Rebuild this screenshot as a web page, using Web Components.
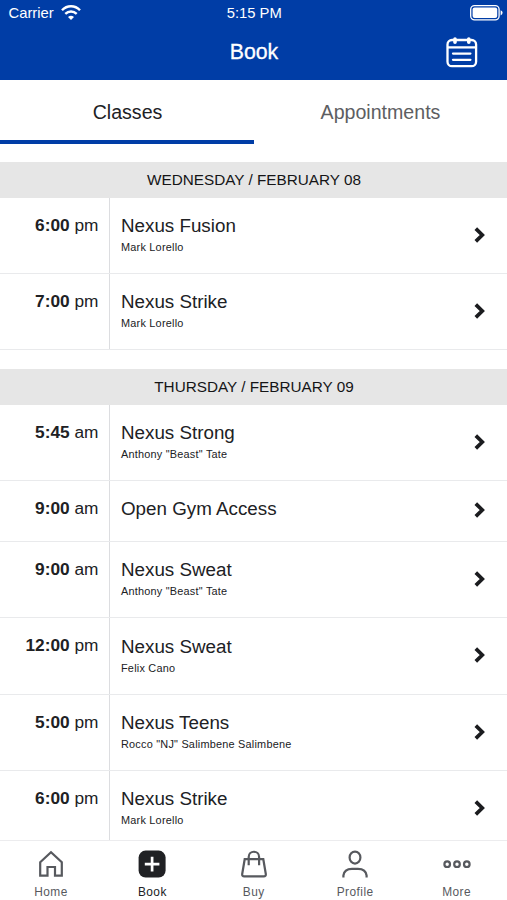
<!DOCTYPE html>
<html lang="en">
<head>
<meta charset="utf-8">
<title>Book</title>
<style>
  body {
    margin: 0;
    background: #fff;
    color: #202124;
    font-family: "Liberation Sans", Arial, sans-serif;
    overflow: hidden;
  }
</style>
</head>
<body>
<booking-app>
  <status-bar slot="top" carrier="Carrier" time="5:15 PM"></status-bar>
  <title-bar slot="top">Book</title-bar>
  <tab-strip slot="top">
    <tab-item active>Classes</tab-item>
    <tab-item>Appointments</tab-item>
  </tab-strip>

  <day-group day="WEDNESDAY / FEBRUARY 08">
    <class-row time="6:00" period="pm" coach="Mark Lorello">Nexus Fusion</class-row>
    <class-row time="7:00" period="pm" coach="Mark Lorello">Nexus Strike</class-row>
  </day-group>
  <day-group day="THURSDAY / FEBRUARY 09">
    <class-row time="5:45" period="am" coach='Anthony "Beast" Tate'>Nexus Strong</class-row>
    <class-row time="9:00" period="am">Open Gym Access</class-row>
    <class-row time="9:00" period="am" coach='Anthony "Beast" Tate'>Nexus Sweat</class-row>
    <class-row time="12:00" period="pm" coach="Felix Cano">Nexus Sweat</class-row>
    <class-row time="5:00" period="pm" coach='Rocco "NJ" Salimbene Salimbene'>Nexus Teens</class-row>
    <class-row time="6:00" period="pm" coach="Mark Lorello">Nexus Strike</class-row>
  </day-group>

  <nav-bar slot="bottom">
    <nav-item icon="home">Home</nav-item>
    <nav-item icon="book" active>Book</nav-item>
    <nav-item icon="buy">Buy</nav-item>
    <nav-item icon="profile">Profile</nav-item>
    <nav-item icon="more">More</nav-item>
  </nav-bar>
</booking-app>

<script>
class BookingApp extends HTMLElement {
  constructor() {
    super();
    this.attachShadow({ mode: "open" });
    this.shadowRoot.innerHTML = `
      <style>
        :host {
          display: flex;
          flex-direction: column;
          height: 900px;
        }
        main {
          flex: 1;
          min-height: 0;
          overflow: hidden;
          display: flex;
          flex-direction: column;
          gap: 18.7px;
          padding-top: 18px;
        }
      </style>
      <slot name="top"></slot>
      <main><slot></slot></main>
      <slot name="bottom"></slot>`;
  }
}

class StatusBar extends HTMLElement {
  constructor() {
    super();
    this.attachShadow({ mode: "open" });
  }

  connectedCallback() {
    this.shadowRoot.innerHTML = `
      <style>
        :host {
          display: grid;
          grid-template-columns: 1fr auto 1fr;
          align-items: center;
          flex: none;
          height: 25px;
          padding: 0 4px 0 8.5px;
          background: #003da6;
          color: #fff;
          font-size: 14.8px;
        }
        .left { display: flex; align-items: center; gap: 7px; }
        .time { padding-right: 3px; }
        .battery { justify-self: end; }
        svg { display: block; }
      </style>
      <div class="left">
        <span>${this.getAttribute("carrier")}</span>
        <svg width="20" height="15" viewBox="0 0 20 15" fill="none" stroke="#fff" stroke-width="2.4">
          <path d="M1 5.2C6-.1 14-.1 19 5.2M4.3 8.9C7.6 5.7 12.4 5.7 15.7 8.9"/>
          <path d="M10 14.9L7 11.9Q10 9.5 13 11.9Z" fill="#fff" stroke="none"/>
        </svg>
      </div>
      <span class="time">${this.getAttribute("time")}</span>
      <svg class="battery" width="33" height="16" viewBox="0 0 33 16">
        <rect x=".7" y=".7" width="28.4" height="14.2" rx="3.8" fill="none" stroke="#fff" stroke-width="1.3"/>
        <rect x="2.6" y="2.6" width="24.6" height="10.4" rx="2" fill="#fff"/>
        <path d="M30.6 5.2Q32.6 6 32.6 7.8T30.6 10.4Z" fill="#fff"/>
      </svg>`;
  }
}

class TitleBar extends HTMLElement {
  constructor() {
    super();
    this.attachShadow({ mode: "open" });
    this.shadowRoot.innerHTML = `
      <style>
        :host {
          display: grid;
          grid-template-columns: 1fr auto 1fr;
          align-items: center;
          flex: none;
          height: 55px;
          padding: 0 28px 1px 29px;
          box-sizing: border-box;
          background: #003da6;
          color: #fff;
          font-size: 21.3px;
          -webkit-text-stroke: .3px #fff;
        }
        .title { grid-column: 2; }
        svg { justify-self: end; display: block; }
      </style>
      <span class="title"><slot></slot></span>
      <svg width="34" height="34" viewBox="0 0 34 34" fill="none" stroke="#fff" stroke-width="2.3" stroke-linecap="round">
        <rect x="2.5" y="5" width="28.6" height="26.2" rx="4.5"/>
        <path d="M3 12.4H31" stroke-linecap="butt"/>
        <path d="M10 4V7.2M23.8 4V7.2" stroke-width="3.6"/>
        <path d="M8 18.6H25.4M8 24.8H25.4"/>
      </svg>`;
  }
}

class TabStrip extends HTMLElement {
  constructor() {
    super();
    this.attachShadow({ mode: "open" });
    this.shadowRoot.innerHTML = `
      <style>
        :host {
          display: flex;
          flex: none;
          height: 64px;
        }
      </style>
      <slot></slot>`;
  }
}

class TabItem extends HTMLElement {
  constructor() {
    super();
    this.attachShadow({ mode: "open" });
    this.shadowRoot.innerHTML = `
      <style>
        :host {
          display: flex;
          flex: 1;
          box-sizing: border-box;
          align-items: center;
          justify-content: center;
          border-bottom: 4px solid transparent;
          padding-top: 4px;
          color: #5d5e62;
          font-size: 19.6px;
        }
        :host([active]) {
          border-color: #003da6;
          padding-left: 1px;
          color: #202124;
        }
      </style>
      <slot></slot>`;
  }
}

class DayGroup extends HTMLElement {
  constructor() {
    super();
    this.attachShadow({ mode: "open" });
  }

  connectedCallback() {
    this.shadowRoot.innerHTML = `
      <style>
        :host { display: block; flex: none; }
        header {
          height: 35.8px;
          line-height: 36px;
          padding-left: 1px;
          background: #e6e6e6;
          text-align: center;
          font-size: 15.3px;
          color: #151517;
        }
      </style>
      <header>${this.getAttribute("day")}</header>
      <slot></slot>`;
  }
}

class ClassRow extends HTMLElement {
  constructor() {
    super();
    this.attachShadow({ mode: "open" });
  }

  connectedCallback() {
    const coach = this.getAttribute("coach");
    this.shadowRoot.innerHTML = `
      <style>
        :host {
          display: flex;
          box-sizing: border-box;
          height: ${coach ? 76.25 : 61.2}px;
          border-bottom: 1px solid #e9eaec;
        }
        .time {
          box-sizing: border-box;
          width: 110px;
          padding: 17px 10.5px 0 0;
          border-right: 1px solid #dcdde0;
          text-align: right;
          font-size: 17.3px;
          line-height: 20px;
        }
        .info { flex: 1; padding: 17.2px 0 0 11px; }
        .name { font-size: 18.8px; line-height: 22px; }
        .coach {
          margin-top: 4px;
          font-size: 10.9px;
          line-height: 13px;
          letter-spacing: .22px;
        }
        svg { align-self: center; margin: 0 20px 1.4px 0; }
      </style>
      <div class="time"><b>${this.getAttribute("time")}</b> ${this.getAttribute("period")}</div>
      <div class="info">
        <div class="name"><slot></slot></div>
        ${coach ? `<div class="coach">${coach}</div>` : ""}
      </div>
      <svg width="14" height="18" viewBox="0 0 14 18" fill="none" stroke="#1b1c1f" stroke-width="3.7">
        <path d="M2.8 2.6L9.3 9L2.8 15.4"/>
      </svg>`;
  }
}

class NavBar extends HTMLElement {
  constructor() {
    super();
    this.attachShadow({ mode: "open" });
    this.shadowRoot.innerHTML = `
      <style>
        :host {
          display: flex;
          flex: none;
          box-sizing: border-box;
          height: 60px;
          border-top: 1px solid #ececee;
          background: #fff;
        }
      </style>
      <slot></slot>`;
  }
}

const icons = {
  home: `<path d="M4.2 13.2L15 3.2L25.8 13.2V26.6H19V18H11.5V26.6H4.2Z"/>`,
  book: `<rect x="1.6" y="1.6" width="27" height="27" rx="7" fill="#202124" stroke="none"/>
    <path d="M15.1 7.8V22.4M7.8 15.1H22.4" stroke="#fff" stroke-width="2.7"/>`,
  buy: `<path d="M5.7 10.2H24.3L26.8 25Q27 27.4 24.8 27.4H5.2Q3 27.4 3.2 25Z"/>
    <path d="M9.7 16.2V8C9.7 1 20.1 1 20.1 8V16.2"/>`,
  profile: `<ellipse cx="15" cy="8.6" rx="5.4" ry="6"/>
    <path d="M3.4 28.6V26.5Q4.2 19.8 12 19.8H18Q25.8 19.8 26.6 26.5V28.6"/>`,
  more: `<circle cx="5.2" cy="15.2" r="2.8"/><circle cx="15" cy="15.2" r="2.8"/><circle cx="24.8" cy="15.2" r="2.8"/>`
};

class NavItem extends HTMLElement {
  constructor() {
    super();
    this.attachShadow({ mode: "open" });
  }

  connectedCallback() {
    this.shadowRoot.innerHTML = `
      <style>
        :host {
          display: flex;
          flex: 1;
          flex-direction: column;
          align-items: center;
          padding: 7.5px 0 0 .5px;
          color: #57595e;
          font-size: 11.9px;
          letter-spacing: .45px;
        }
        :host([active]) { color: #202124; }
        svg { display: block; }
        span { margin-top: 6px; line-height: 14px; }
      </style>
      <svg width="30" height="30" viewBox="0 0 30 30" fill="none" stroke="currentColor" stroke-width="2.2">
        ${icons[this.getAttribute("icon")]}
      </svg>
      <span><slot></slot></span>`;
  }
}

customElements.define("booking-app", BookingApp);
customElements.define("status-bar", StatusBar);
customElements.define("title-bar", TitleBar);
customElements.define("tab-strip", TabStrip);
customElements.define("tab-item", TabItem);
customElements.define("day-group", DayGroup);
customElements.define("class-row", ClassRow);
customElements.define("nav-bar", NavBar);
customElements.define("nav-item", NavItem);
</script>
</body>
</html>
